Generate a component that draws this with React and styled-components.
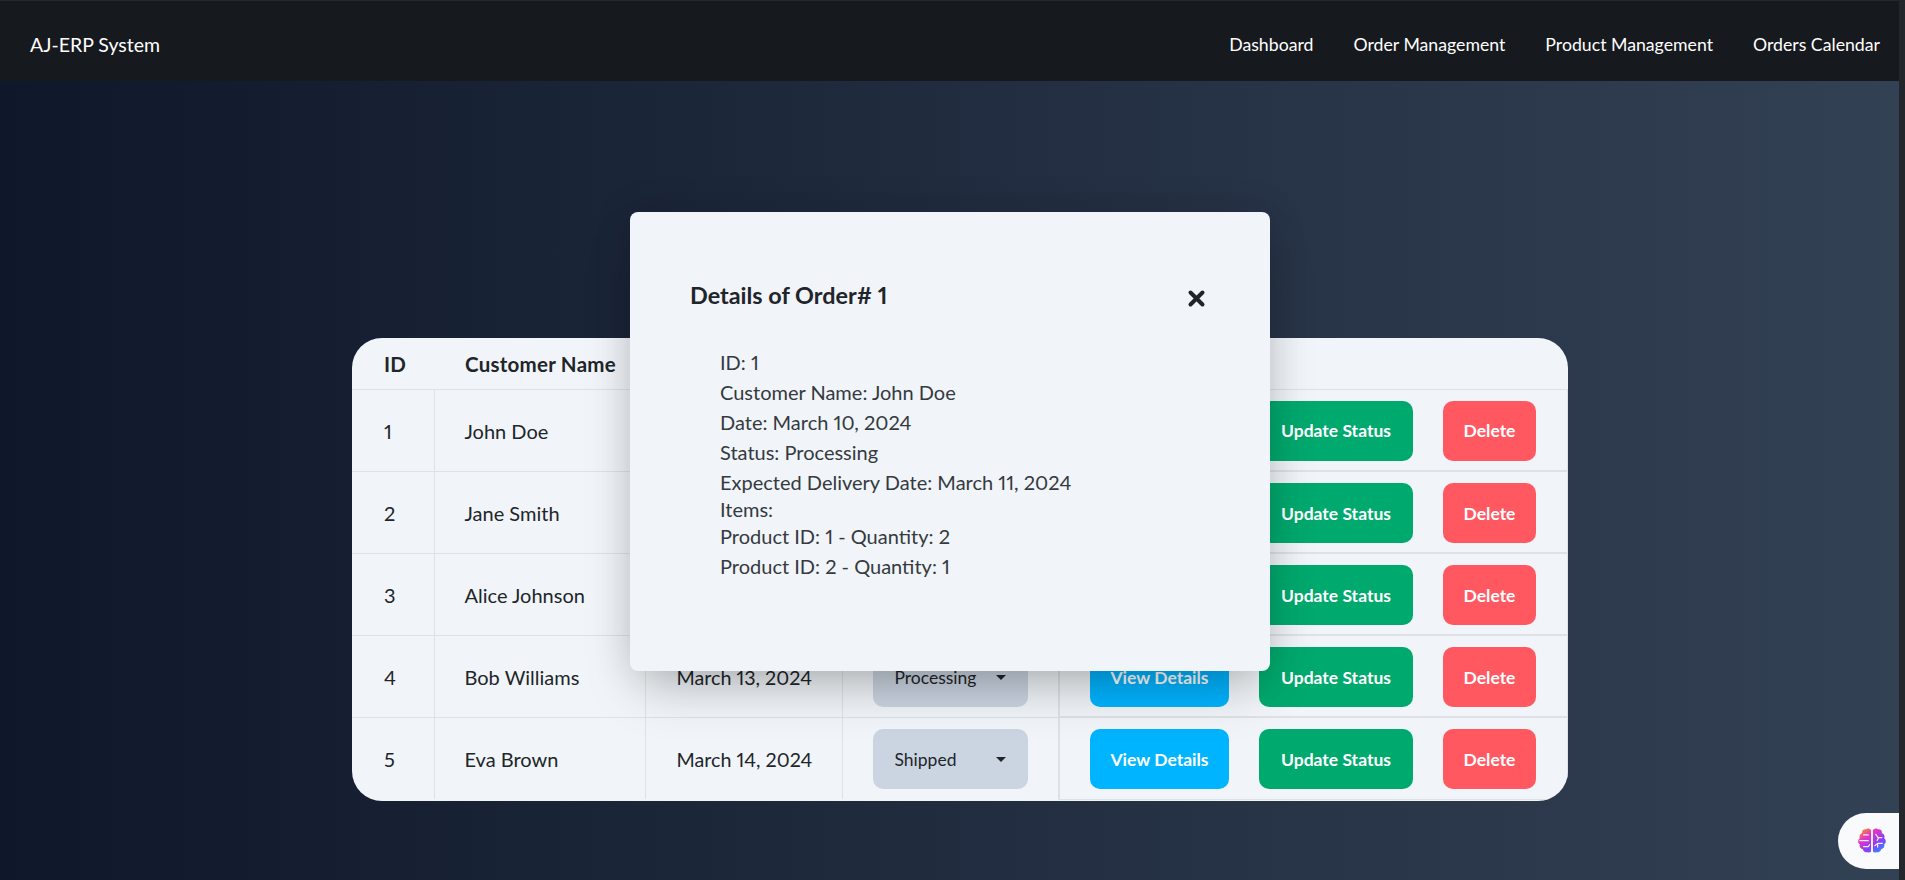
import React from "react";
import styled, { createGlobalStyle } from "styled-components";

const GlobalStyle = createGlobalStyle`
  html, body {
    margin: 0;
    height: 100%;
    overflow: hidden;
  }
  body {
    font-family: Lato, "Noto Sans", sans-serif;
    font-variant-numeric: proportional-nums;
    color: #212529;
  }
`;

const Shell = styled.div`
  position: relative;
  display: flex;
  height: 880px;
`;

const Page = styled.div`
  position: relative;
  flex: 1;
  min-width: 0;
  display: flex;
  flex-direction: column;
  background: linear-gradient(to right, #0f172a, #334155);
`;

const ScrollTrack = styled.div`
  width: 6px;
  background: #23262b;
`;

const Navbar = styled.nav`
  height: 81px;
  box-sizing: border-box;
  border-top: 1px solid #25282d;
  padding: 7px 19px 0 30px;
  display: flex;
  align-items: center;
  justify-content: space-between;
  background: #16191e;
  color: #fff;
  font-size: 17.7px;
`;

const Brand = styled.div`
  font-size: 19.5px;
`;

const NavLinks = styled.div`
  display: flex;
  gap: 40px;
`;

const Main = styled.main`
  padding: 257px 0 0 352px;
`;

const Card = styled.div`
  width: 1216px;
  height: 463px;
  border-radius: 30px;
  overflow: hidden;
  background: #f1f5f9;
`;

const Table = styled.table`
  width: 100%;
  table-layout: fixed;
  border-collapse: collapse;
  font-size: 20px;
`;

const Th = styled.th`
  height: 51px;
  padding: 2px 0 0 31px;
  box-sizing: border-box;
  text-align: left;
  font-size: 20.5px;
  font-weight: 700;
  letter-spacing: 0.25px;
  border-bottom: 1px solid #dee2e6;

  &:first-child {
    padding-left: 32px;
  }
`;

const Td = styled.td`
  height: 82px;
  padding: 2px 0 0 30px;
  box-sizing: border-box;
  border-bottom: 1px solid #dee2e6;
  border-right: 1px solid #dee2e6;

  tr:last-child > & {
    border-bottom: none;
  }
`;

const IdTd = styled(Td)`
  padding-left: 32px;
`;

const DateTd = styled(Td)`
  padding-left: 31px;
  font-size: 19.7px;
`;

const ActionTd = styled(Td)`
  padding-left: 30px;
  border-bottom-width: 2px;
  border-left: 2px solid #dee2e6;
  border-right: 1px solid #dee2e6;

  tr:last-child > & {
    border-bottom: 1px solid #dee2e6;
  }
`;

const Actions = styled.div`
  display: flex;
  gap: 30px;
`;

const StatusSelect = styled.div`
  width: 155px;
  height: 60px;
  box-sizing: border-box;
  padding: 0 22px;
  display: flex;
  align-items: center;
  justify-content: space-between;
  border-radius: 10px;
  background: #cbd5e1;
  font-size: 17.5px;
`;

const Caret = styled.span`
  width: 0;
  height: 0;
  border-left: 5px solid transparent;
  border-right: 5px solid transparent;
  border-top: 5px solid #212529;
`;

const ActionButton = styled.button`
  width: ${p => p.$width}px;
  height: 60px;
  padding: 0;
  border: none;
  border-radius: 10px;
  background: ${p => p.$color};
  color: #fff;
  font-family: inherit;
  font-size: 17.5px;
  font-weight: 700;
`;

const Modal = styled.div`
  position: absolute;
  left: 630px;
  top: 212px;
  width: 640px;
  height: 459px;
  box-sizing: border-box;
  padding: 64px 64px 0 60px;
  border-radius: 8px;
  background: #f1f4f9;
  box-shadow: 0 25px 50px -12px rgba(0, 0, 0, 0.25), 0 0 40px rgba(0, 0, 0, 0.1);
`;

const ModalHeader = styled.div`
  display: flex;
  justify-content: space-between;
  align-items: flex-start;
  padding-bottom: 33px;
`;

const ModalTitle = styled.h2`
  margin: 0;
  font-size: 23.4px;
  font-weight: 700;
  line-height: 38px;
`;

const CloseIcon = styled.svg`
  width: 19px;
  height: 19px;
  margin-top: 13px;
`;

const ModalBody = styled.div`
  padding-left: 30px;
  font-size: 20px;
  line-height: 30px;
  color: #343a40;
`;

const BodyLine = styled.div`
  line-height: ${p => p.$height || 30}px;
`;

const AssistantTab = styled.div`
  position: absolute;
  right: 0;
  bottom: 11px;
  width: 61px;
  height: 56px;
  box-sizing: border-box;
  padding-left: 7px;
  border-radius: 28px 0 0 28px;
  background: #f9fafb;
  display: flex;
  align-items: center;
  justify-content: center;
`;

const orders = [
  { id: 1, name: "John Doe", date: "March 10, 2024", status: "Processing" },
  { id: 2, name: "Jane Smith", date: "March 11, 2024", status: "Shipped" },
  { id: 3, name: "Alice Johnson", date: "March 12, 2024", status: "Delivered" },
  { id: 4, name: "Bob Williams", date: "March 13, 2024", status: "Processing" },
  { id: 5, name: "Eva Brown", date: "March 14, 2024", status: "Shipped" },
];

const details = [
  "ID: 1",
  "Customer Name: John Doe",
  "Date: March 10, 2024",
  "Status: Processing",
  "Expected Delivery Date: March 11, 2024",
];

function BrainIcon() {
  return (
    <svg width="30" height="30" viewBox="0 0 32 30">
      <defs>
        <linearGradient id="brainFill" x1="0.1" y1="0" x2="0.9" y2="1">
          <stop offset="0" stopColor="#f59e0b" />
          <stop offset="0.3" stopColor="#e935c1" />
          <stop offset="0.65" stopColor="#8b3cf7" />
          <stop offset="1" stopColor="#1e9bff" />
        </linearGradient>
      </defs>
      <path
        fill="url(#brainFill)"
        d="M15 3.5C14 1.5 11 1 9.5 2.5 7 2 5 4 5.5 6.5 3 7.5 2 10 3 12 .8 13.5.5 17 3 18.5c-.8 2.5.8 5 3.2 5.2.5 2.6 3.3 4 5.500 3.2 1.300.9 3.300.3 3.300-1.400zM17 3.500c1-2 4-2.500 5.500-1 2.500-.5 4.500 1.500 4 4 2.500 1 3.500 3.500 2.500 5.500 2.200 1.500 2.500 5 0 6.500.8 2.500-.8 5-3.200 5.200-.5 2.600-3.300 4-5.500 3.200-1.300.9-3.300.3-3.300-1.400z"
      />
      <path
        d="M3 14.500h9M7 8.500h5M7 21h5l1.500-2M20 8l2.500 3.500h4M23 11.500l-1.500 3M19 20l3-2.500h5M22 17.500v4"
        fill="none"
        stroke="#f3eefc"
        strokeWidth="1.300"
        strokeLinecap="round"
        strokeLinejoin="round"
      />
    </svg>
  );
}

export default function App() {
  return (
    <Shell>
      <GlobalStyle />
      <Page>
        <Navbar>
          <Brand>AJ-ERP System</Brand>
          <NavLinks>
            <span>Dashboard</span>
            <span>Order Management</span>
            <span>Product Management</span>
            <span>Orders Calendar</span>
          </NavLinks>
        </Navbar>
        <Main>
          <Card>
            <Table>
              <colgroup>
                <col width="82" />
                <col width="211" />
                <col width="197" />
                <col width="217" />
                <col />
              </colgroup>
              <thead>
                <tr>
                  <Th>ID</Th>
                  <Th>Customer Name</Th>
                  <Th>Date</Th>
                  <Th>Status</Th>
                  <Th>Actions</Th>
                </tr>
              </thead>
              <tbody>
                {orders.map(order => (
                  <tr key={order.id}>
                    <IdTd>{order.id}</IdTd>
                    <Td>{order.name}</Td>
                    <DateTd>{order.date}</DateTd>
                    <Td>
                      <StatusSelect>
                        {order.status}
                        <Caret />
                      </StatusSelect>
                    </Td>
                    <ActionTd>
                      <Actions>
                        <ActionButton $width={139} $color="#00b4ff">View Details</ActionButton>
                        <ActionButton $width={154} $color="#00a96e">Update Status</ActionButton>
                        <ActionButton $width={93} $color="#ff5861">Delete</ActionButton>
                      </Actions>
                    </ActionTd>
                  </tr>
                ))}
              </tbody>
            </Table>
          </Card>
        </Main>
        <Modal>
          <ModalHeader>
            <ModalTitle>Details of Order# 1</ModalTitle>
            <CloseIcon viewBox="0 0 19 19">
              <path d="M3.500 3.500L15.500 15.500M15.500 3.500L3.500 15.500" stroke="#212529" strokeWidth="4" strokeLinecap="round" />
            </CloseIcon>
          </ModalHeader>
          <ModalBody>
            {details.map(line => (
              <BodyLine key={line}>{line}</BodyLine>
            ))}
            <BodyLine $height={24.5}>Items:</BodyLine>
            <BodyLine $height={29.5}>Product ID: 1 - Quantity: 2</BodyLine>
            <BodyLine>Product ID: 2 - Quantity: 1</BodyLine>
          </ModalBody>
        </Modal>
        <AssistantTab>
          <BrainIcon />
        </AssistantTab>
      </Page>
      <ScrollTrack />
    </Shell>
  );
}
